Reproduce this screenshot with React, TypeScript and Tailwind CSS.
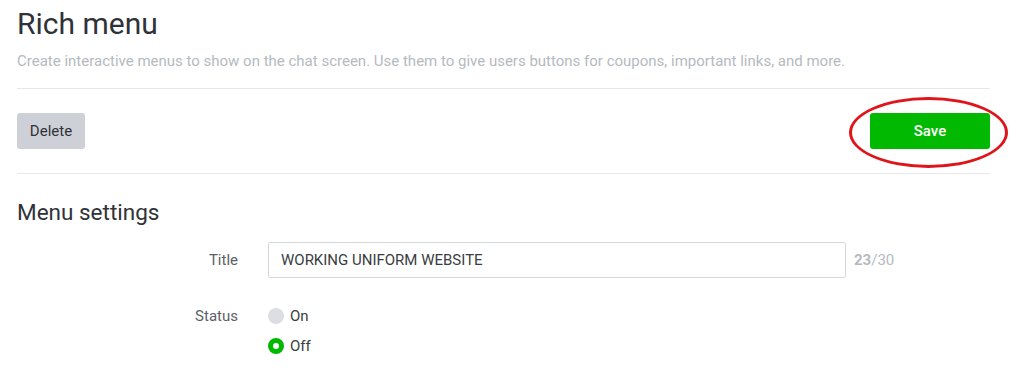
import React from 'react';

const FONT = { fontFamily: 'Roboto, "Liberation Sans", sans-serif' };

function Radio({ label, checked }: { label: string; checked?: boolean }) {
  return (
    <label className="flex items-center gap-[6px] h-[30px] text-[15px] text-[#3a3d42]">
      <span
        className={`w-4 h-4 rounded-full box-border ${
          checked ? 'border-[5px] border-[#00b900] bg-white' : 'bg-[#dcdee3]'
        }`}
      />
      {label}
    </label>
  );
}

export default function App() {
  return (
    <div className="bg-white w-[1027px] h-[375px] overflow-hidden pl-[17px] pr-[37px]" style={FONT}>
      <h1 className="pt-[6px] text-[30px] leading-[36px] text-[#2f3238]">Rich menu</h1>
      <p className="mt-[9px] text-[15px] leading-[20px] text-[#b5bac1]">
        Create interactive menus to show on the chat screen. Use them to give users buttons for coupons, important
        links, and more.
      </p>

      <div className="mt-[17px] border-t border-[#e6e7ea] py-6 flex items-center justify-between border-b">
        <button className="h-9 w-[68px] rounded-[3px] bg-[#cdd1d7] text-[15px] text-[#2f3238]">Delete</button>
        <div className="relative">
          <button className="h-9 w-[120px] rounded-[3px] bg-[#00b900] text-[15px] font-medium text-white">
            Save
          </button>
          <div className="absolute left-[-21px] top-[-16px] w-[159px] h-[71px] rounded-[50%] border-[3px] border-[#e0141b] pointer-events-none" />
        </div>
      </div>

      <h2 className="mt-[24px] text-[22.5px] leading-[28px] text-[#2f3238]">Menu settings</h2>

      <div className="mt-[16px] flex items-center gap-[30px]">
        <div className="w-[221px] text-right text-[15px] text-[#5b5f66]">Title</div>
        <div className="flex items-center gap-2">
          <div className="w-[578px] h-[36px] border border-[#d3d6db] rounded-[2px] flex items-center px-[12px] text-[15px] text-[#3a3d42]">
            WORKING UNIFORM WEBSITE
          </div>
          <span className="text-[15px] text-[#b5bac1]">
            <b className="font-bold">23</b>/30
          </span>
        </div>
      </div>

      <div className="mt-[23px] flex gap-[30px]">
        <div className="w-[221px] text-right text-[15px] leading-[30px] text-[#5b5f66]">Status</div>
        <div className="flex flex-col">
          <Radio label="On" />
          <Radio label="Off" checked />
        </div>
      </div>
    </div>
  );
}
